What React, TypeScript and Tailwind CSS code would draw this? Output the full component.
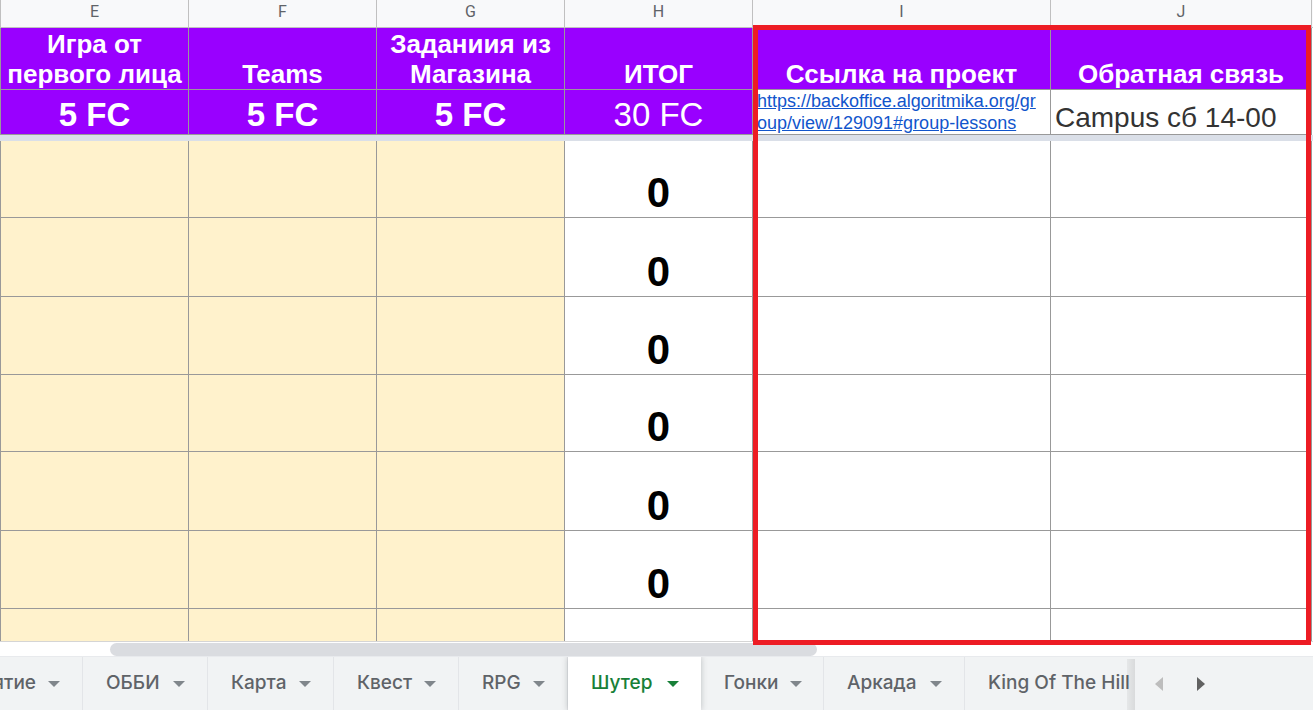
import React from "react";

const columns = ["E", "F", "G", "H", "I", "J"];
const titles = [
  "Игра от первого лица",
  "Teams",
  "Заданиия из Магазина",
  "ИТОГ",
  "Ссылка на проект",
  "Обратная связь",
];
const rowHeights = ["h-[77px]", "h-[79px]", "h-[78px]", "h-[77px]", "h-[79px]", "h-[78px]"];
const grid = "border-r border-b border-[#999999] p-0";
const scoreCell = `${grid} bg-[#fff2cc] first:border-l`;
const purple = `${grid} bg-[#9900ff] text-white first:border-l`;

type Tab = { name: string; width: string; active?: boolean; clipped?: boolean };

const tabs: Tab[] = [
  { name: "Занятие", width: "w-[83px]", clipped: true },
  { name: "ОББИ", width: "w-[125px]" },
  { name: "Карта", width: "w-[126px]" },
  { name: "Квест", width: "w-[125px]" },
  { name: "RPG", width: "w-[109px]" },
  { name: "Шутер", width: "w-[133px]", active: true },
  { name: "Гонки", width: "w-[123px]" },
  { name: "Аркада", width: "w-[141px]" },
  { name: "King Of The Hill", width: "w-[220px]" },
];

function Caret() {
  return (
    <svg className="h-[6px] w-[12px]" viewBox="0 0 12 6" fill="currentColor" aria-hidden="true">
      <path d="M0 0h12L6 6z" />
    </svg>
  );
}

function Sheet() {
  return (
    <table className="w-full min-w-[1312px] table-fixed border-separate border-spacing-0">
      <colgroup>
        <col className="w-[189px]" />
        <col className="w-[188px]" />
        <col className="w-[188px]" />
        <col className="w-[188px]" />
        <col className="w-[298px]" />
        <col className="w-[261px]" />
        <col />
      </colgroup>
      <thead>
        <tr className="h-[28px]">
          {columns.map((c) => (
            <th
              key={c}
              scope="col"
              className="border-r border-b border-[#c0c0c0] bg-[#f8f9fa] p-0 pb-1 font-[Roboto,sans-serif] text-[16px] leading-[22px] font-normal text-[#5f6368] first:border-l"
            >
              {c}
            </th>
          ))}
          <td className="border-b border-[#c0c0c0] bg-[#f8f9fa] p-0" />
        </tr>
      </thead>
      <tbody>
        <tr className="h-[62px]">
          {titles.map((t) => (
            <td key={t} className={`${purple} px-1 text-center align-bottom text-[26px] leading-[30px] font-bold`}>
              {t}
            </td>
          ))}
          <td className="p-0" />
        </tr>
        <tr className="h-[45px]">
          {["E", "F", "G"].map((c) => (
            <td key={c} className={`${purple} text-center align-bottom text-[33px] leading-[38px] font-bold`}>
              5 FC
            </td>
          ))}
          <td className={`${purple} text-center align-bottom text-[33px] leading-[38px]`}>30 FC</td>
          <td className={`${grid} pr-2 pl-1 align-bottom text-[18px] leading-[22px]`}>
            <a
              href="https://backoffice.algoritmika.org/group/view/129091#group-lessons"
              className="break-all text-[#1155cc] underline"
            >
              https://backoffice.algoritmika.org/group/view/129091#group-lessons
            </a>
          </td>
          <td className={`${grid} pl-1 align-bottom text-[28px] leading-[32px] text-[#333333]`}>Campus сб 14-00</td>
          <td className="p-0" />
        </tr>
        <tr className="h-[6px]">
          <td colSpan={7} className="bg-[#dadfe8] p-0" />
        </tr>
        {rowHeights.map((h, i) => (
          <tr key={i} className={h}>
            <td className={scoreCell} />
            <td className={scoreCell} />
            <td className={scoreCell} />
            <td className={`${grid} text-center align-bottom text-[42px] leading-[48px] font-bold text-black`}>0</td>
            <td className={grid} />
            <td className={grid} />
            <td className="p-0" />
          </tr>
        ))}
        <tr className="h-[32px]">
          <td className="border-x border-[#999999] bg-[#fff2cc] p-0" />
          <td className="border-r border-[#999999] bg-[#fff2cc] p-0" />
          <td className="border-r border-[#999999] bg-[#fff2cc] p-0" />
          <td className="border-r border-[#999999] p-0" />
          <td className="border-r border-[#999999] p-0" />
          <td className="border-r border-[#999999] p-0" />
          <td className="p-0" />
        </tr>
      </tbody>
    </table>
  );
}

function SheetTab({ tab }: { tab: Tab }) {
  const tone = tab.active
    ? "z-10 bg-white text-[#188038] shadow-[0_0_6px_rgba(60,64,67,0.3)]"
    : "border-r border-[#e3e5e8] text-[#5f6368]";
  return (
    <button
      type="button"
      className={`flex h-full shrink-0 items-center whitespace-nowrap ${tab.clipped ? "justify-end" : "justify-between pl-[23px]"} gap-3 pr-[22px] ${tab.width} ${tone}`}
    >
      <span>{tab.name}</span>
      <span className={`shrink-0 ${tab.active ? "text-[#188038]" : "text-[#80868b]"}`}>
        <Caret />
      </span>
    </button>
  );
}

export default function App() {
  return (
    <div className="flex min-h-screen flex-col overflow-hidden bg-white font-['Liberation_Sans',Arial,sans-serif]">
      <main className="relative border-b border-[#d5d5d5]">
        <Sheet />
        <div className="pointer-events-none absolute top-[25px] right-[2px] -bottom-1 left-[753px] z-20 border-5 border-[#ed1c24]" />
      </main>
      <div className="flex h-[14px] items-end">
        <div className="ml-[110px] h-[13px] w-[707px] rounded-full bg-[#dadce0]" />
      </div>
      <footer className="flex h-[54px] border-t border-[#e8eaed] bg-[#f1f3f4] font-[Inter,sans-serif] text-[19px] font-medium">
        <nav className="relative flex w-[1135px] overflow-hidden" aria-label="Листы">
          {tabs.map((t) => (
            <SheetTab key={t.name} tab={t} />
          ))}
          <div className="absolute top-[2px] right-0 bottom-0 z-20 w-2 bg-linear-to-r from-black/5 to-black/10" />
        </nav>
        <div className="flex items-center gap-[34px] pl-5">
          <button type="button" aria-label="Назад" className="text-[#bdbdbd]">
            <svg className="h-[14px] w-[8px]" viewBox="0 0 8 14" fill="currentColor">
              <path d="M8 0v14L0 7z" />
            </svg>
          </button>
          <button type="button" aria-label="Вперёд" className="text-[#616161]">
            <svg className="h-[14px] w-[8px]" viewBox="0 0 8 14" fill="currentColor">
              <path d="M0 0v14l8-7z" />
            </svg>
          </button>
        </div>
      </footer>
    </div>
  );
}
